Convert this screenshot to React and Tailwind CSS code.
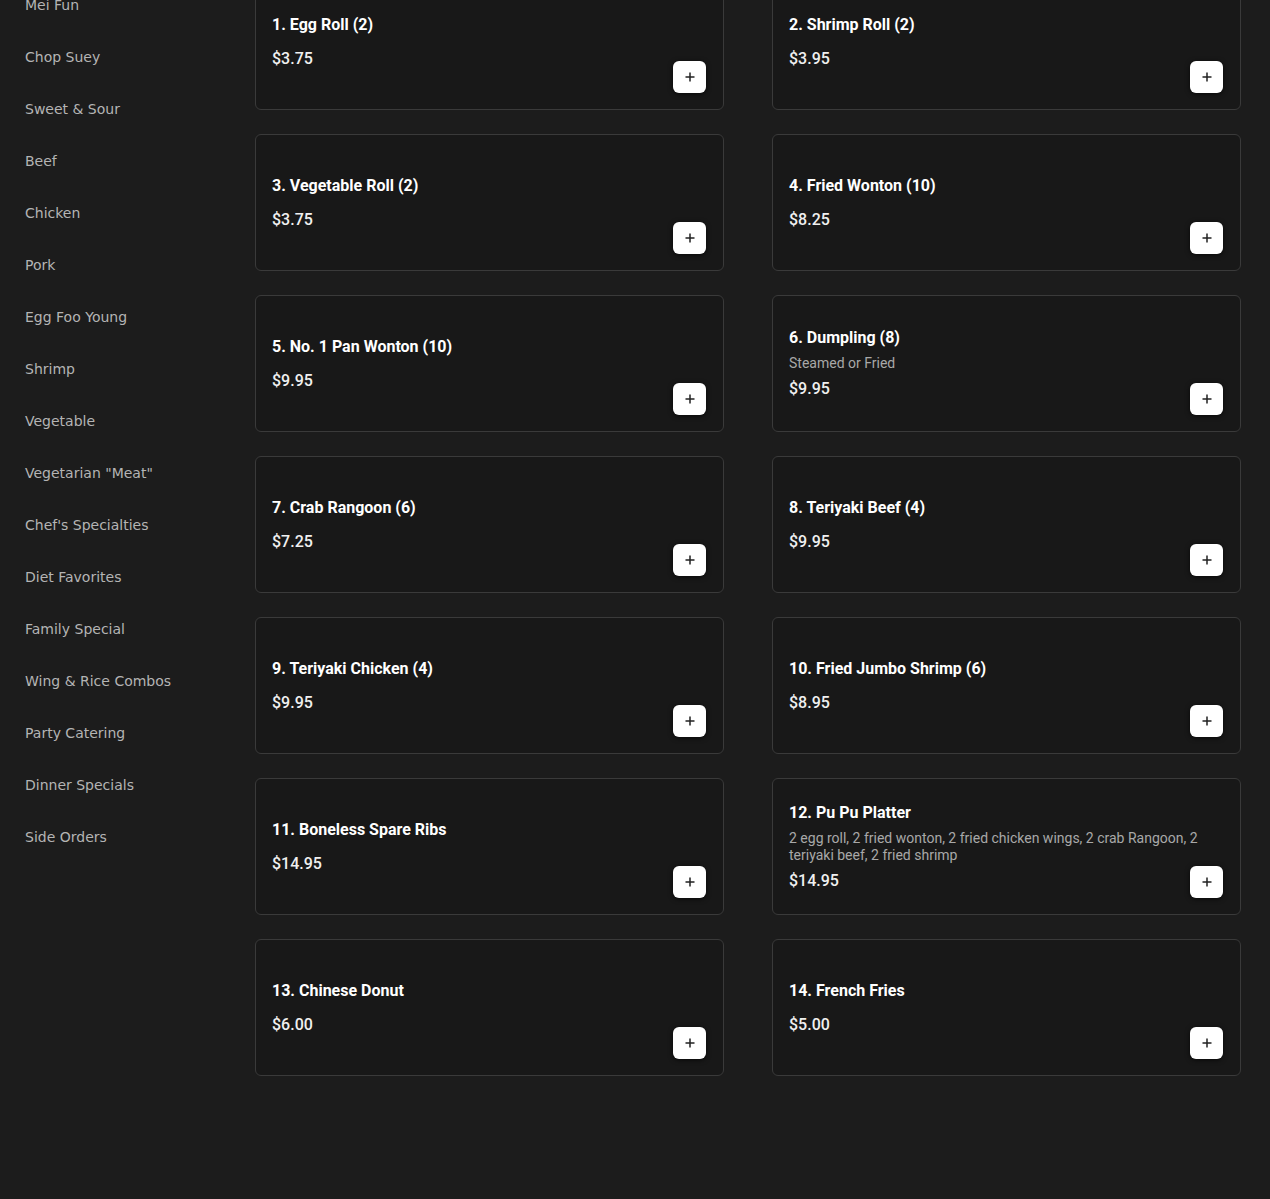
import React from "react";

const categories = [
  "Mei Fun",
  "Chop Suey",
  "Sweet & Sour",
  "Beef",
  "Chicken",
  "Pork",
  "Egg Foo Young",
  "Shrimp",
  "Vegetable",
  'Vegetarian "Meat"',
  "Chef's Specialties",
  "Diet Favorites",
  "Family Special",
  "Wing & Rice Combos",
  "Party Catering",
  "Dinner Specials",
  "Side Orders",
];

const items = [
  { name: "1. Egg Roll (2)", price: "$3.75" },
  { name: "2. Shrimp Roll (2)", price: "$3.95" },
  { name: "3. Vegetable Roll (2)", price: "$3.75" },
  { name: "4. Fried Wonton (10)", price: "$8.25" },
  { name: "5. No. 1 Pan Wonton (10)", price: "$9.95" },
  { name: "6. Dumpling (8)", desc: "Steamed or Fried", price: "$9.95" },
  { name: "7. Crab Rangoon (6)", price: "$7.25" },
  { name: "8. Teriyaki Beef (4)", price: "$9.95" },
  { name: "9. Teriyaki Chicken (4)", price: "$9.95" },
  { name: "10. Fried Jumbo Shrimp (6)", price: "$8.95" },
  { name: "11. Boneless Spare Ribs", price: "$14.95" },
  {
    name: "12. Pu Pu Platter",
    desc: "2 egg roll, 2 fried wonton, 2 fried chicken wings, 2 crab Rangoon, 2 teriyaki beef, 2 fried shrimp",
    price: "$14.95",
  },
  { name: "13. Chinese Donut", price: "$6.00" },
  { name: "14. French Fries", price: "$5.00" },
];

const MenuCard = ({ item }) => (
  <div className="relative flex h-[137px] items-center rounded-md border border-[#3a3a3a] bg-[#181818] p-4">
    <div className="flex min-w-0 flex-1 flex-col">
      <h3 className="text-[16px] font-bold leading-6 text-white">{item.name}</h3>
      {item.desc && (
        <p className="mt-[5px] text-[14px] leading-[17px] text-[#a8a8a8]">{item.desc}</p>
      )}
      <p className={`${item.desc ? "mt-[5px]" : "mt-2.5"} text-[16px] font-medium leading-6 text-[#f0f0f0]`}>
        {item.price}
      </p>
    </div>
    {/* add button sits over the card's bottom-right corner */}
    <button className="absolute bottom-4 right-[17px] flex h-8 w-[33px] items-center justify-center rounded-md bg-white text-[#222] shadow-[0_1px_5px_rgba(0,0,0,0.7)]">
      <svg width="12" height="12" viewBox="0 0 12 12" fill="none" stroke="currentColor" strokeWidth="1.5">
        <path d="M6 1.5v9M1.5 6h9" />
      </svg>
    </button>
  </div>
);

export default function App() {
  return (
    <div className="flex h-[1199px] w-full overflow-hidden bg-[#1c1c1c] font-['Roboto',sans-serif]">
      <aside className="w-[230px] shrink-0 px-[25px]">
        <ul className="mt-[-21px] flex flex-col">
          {categories.map((c) => (
            <li
              key={c}
              className="py-4 font-['DejaVu_Sans',sans-serif] text-[14px] leading-5 text-[#b4b4b4]"
            >
              {c}
            </li>
          ))}
        </ul>
      </aside>
      <main className="flex-1 pl-[25px] pr-[29px]">
        <div className="mt-[-27px] grid grid-cols-2 gap-x-12 gap-y-6">
          {items.map((item) => (
            <MenuCard key={item.name} item={item} />
          ))}
        </div>
      </main>
    </div>
  );
}
